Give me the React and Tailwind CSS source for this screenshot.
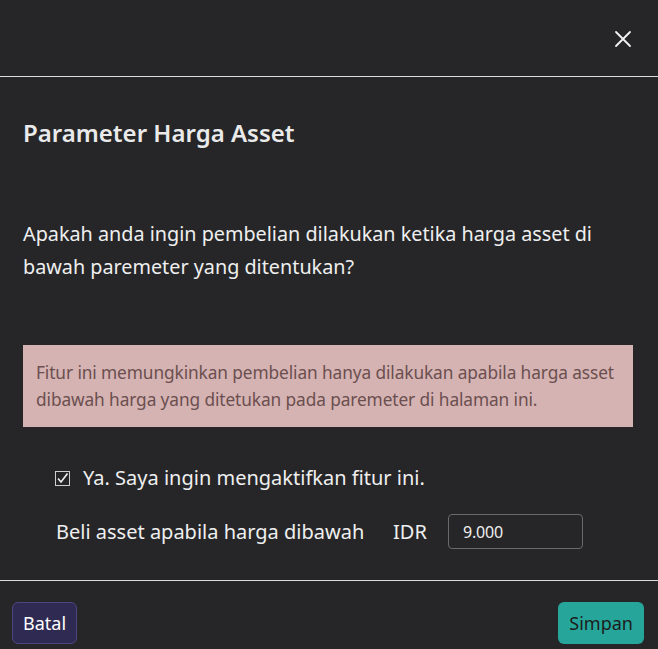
import React from "react";

export default function App() {
  return (
    <div
      className="w-[658px] h-[649px] bg-[#262628] text-[#efefef] flex flex-col overflow-hidden"
      style={{ fontFamily: '"Noto Sans", "Open Sans", sans-serif' }}
    >
      <div className="h-[77px] flex items-center justify-end pr-[26px] border-b border-[#dcdcdc] shrink-0">
        <svg width="18" height="18" viewBox="0 0 18 18" className="mt-[1px]">
          <path d="M2 2 L16 16 M16 2 L2 16" stroke="#f2f2f2" strokeWidth="1.8" strokeLinecap="round" />
        </svg>
      </div>
      <div className="flex-1 pl-[23px] pr-[25px] pt-[40px]">
        <h1 className="text-[24px] font-semibold leading-[32px] text-[#eaeaea]">
          Parameter Harga Asset
        </h1>
        <p className="mt-[68px] text-[19.8px] leading-[33px]">
          Apakah anda ingin pembelian dilakukan ketika harga asset di bawah paremeter yang ditentukan?
        </p>
        <div className="mt-[62px] bg-[#d5b3b3] text-[#6b4f4f] px-[13px] py-[14px] text-[17.3px] leading-[27px] tracking-[-0.1px]">
          Fitur ini memungkinkan pembelian hanya dilakukan apabila harga asset dibawah harga yang ditetukan pada paremeter di halaman ini.
        </div>
        <div className="mt-[36px] pl-[32px] flex items-center gap-[13px]">
          <div className="w-[15px] h-[15px] border border-[#cfcfcf] flex items-center justify-center">
            <svg width="13" height="13" viewBox="0 0 13 13">
              <path d="M2 6.5 L5 10 L11.5 1.5" fill="none" stroke="#f0f0f0" strokeWidth="1.6" />
            </svg>
          </div>
          <span className="text-[20px] leading-[30px]">Ya. Saya ingin mengaktifkan fitur ini.</span>
        </div>
        <div className="mt-[21px] pl-[33px] flex items-center">
          <span className="text-[20px] leading-[30px] w-[337px]">Beli asset apabila harga dibawah</span>
          <span className="text-[20px] leading-[30px] w-[55px]">IDR</span>
          <div className="w-[135px] h-[35px] border border-[#6a6a6a] rounded-[4px] flex items-center pl-[14px] text-[16px] tracking-[-0.2px]">
            9.000
          </div>
        </div>
      </div>
      <div className="h-[69px] border-t border-[#dcdcdc] shrink-0 flex items-start justify-between px-[12px] pt-[21px] pb-[5px]">
        <button className="h-[42px] px-[10px] rounded-[6px] bg-[#2f2a52] border border-[#4c4680] text-[18px] text-white">
          Batal
        </button>
        <button className="h-[42px] px-[11px] mr-[2px] rounded-[6px] bg-[#26a69a] text-[18px] text-[#1c1c1c]">
          Simpan
        </button>
      </div>
    </div>
  );
}
